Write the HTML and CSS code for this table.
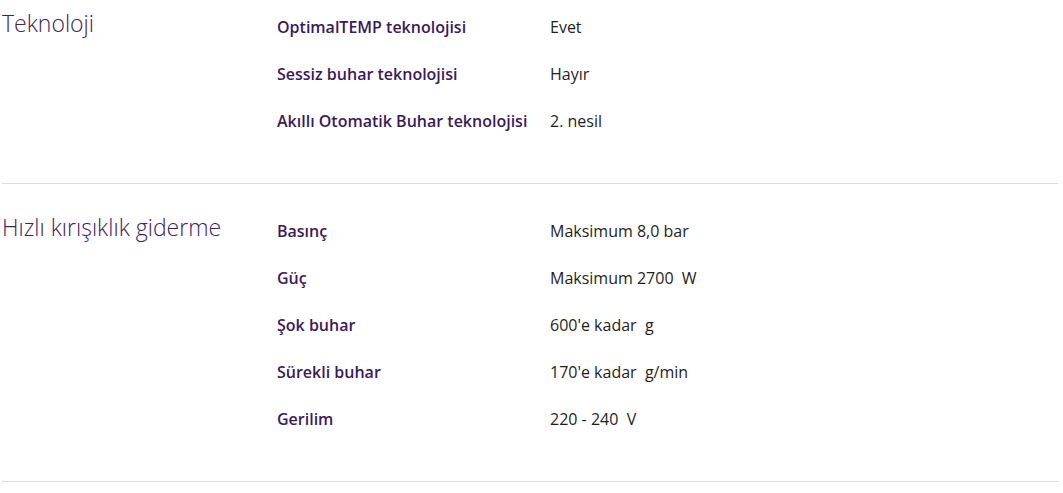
FILE: index.html
```html
<!DOCTYPE html>
<html lang="tr">
<head>
<meta charset="utf-8">
<link rel="stylesheet" href="styles.css">
</head>
<body>
<div class="specs">
  <section class="group">
    <h2 class="group-title">Teknoloji</h2>
    <dl class="rows">
      <div class="row"><dt>OptimalTEMP teknolojisi</dt><dd>Evet</dd></div>
      <div class="row"><dt>Sessiz buhar teknolojisi</dt><dd>Hayır</dd></div>
      <div class="row"><dt>Akıllı Otomatik Buhar teknolojisi</dt><dd>2. nesil</dd></div>
    </dl>
  </section>
  <section class="group">
    <h2 class="group-title">Hızlı kırışıklık giderme</h2>
    <dl class="rows">
      <div class="row"><dt>Basınç</dt><dd>Maksimum 8,0 bar</dd></div>
      <div class="row"><dt>Güç</dt><dd>Maksimum 2700&nbsp; W</dd></div>
      <div class="row"><dt>Şok buhar</dt><dd>600'e kadar&nbsp; g</dd></div>
      <div class="row"><dt>Sürekli buhar</dt><dd>170'e kadar&nbsp; g/min</dd></div>
      <div class="row"><dt>Gerilim</dt><dd>220 - 240&nbsp; V</dd></div>
    </dl>
  </section>
</div>
</body>
</html>
```
FILE: styles.css
```css
html, body {
  margin: 0;
  padding: 0;
  background: #fff;
}
body {
  font-family: "Open Sans", "Noto Sans", sans-serif;
  overflow: hidden;
}
.specs {
  margin: -20px 5px 0 2px;
}
.group {
  display: flex;
  padding: 23px 0 39px;
  border-bottom: 1px solid #dcdcdc;
}
.group-title {
  width: 275px;
  flex: none;
  margin: 0;
  font-size: 23px;
  font-weight: 300;
  line-height: 40px;
  color: #3f2163;
}
.rows {
  margin: 0;
  flex: 1;
}
.row {
  display: flex;
  height: 47px;
  align-items: center;
}
.row dt {
  width: 273px;
  flex: none;
  font-size: 16px;
  font-weight: 600;
  color: #3b1a5c;
}
.row dd {
  margin: 0;
  font-size: 16px;
  color: #1e1e1e;
}
```
